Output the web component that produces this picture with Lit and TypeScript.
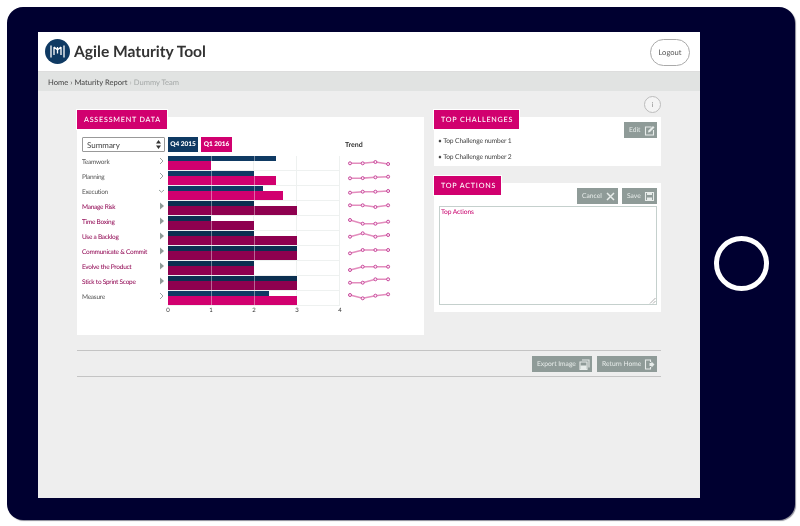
import { css, html, svg, LitElement } from 'lit';
import { customElement } from 'lit/decorators.js';

const UNIT = 43;
const NAVY = '#0f3a63';
const NAVY_DEEP = '#0b2f50';
const PINK = '#d1006f';
const DARK = '#8e004f';

interface Row {
  label: string;
  flagged?: boolean;
  open?: boolean;
  q4: number;
  q1: number;
  trend: number[];
}

const rows: Row[] = [
  { label: 'Teamwork', q4: 2.5, q1: 1, trend: [7.3, 7.3, 6, 8] },
  { label: 'Planning', q4: 2, q1: 2.5, trend: [7.3, 7.1, 6.3, 5.7] },
  { label: 'Execution', open: true, q4: 2.2, q1: 2.67, trend: [6.7, 5.7, 5.7, 5] },
  { label: 'Manage Risk', flagged: true, q4: 2, q1: 3, trend: [4.3, 4.3, 6, 4.3] },
  { label: 'Time Boxing', flagged: true, q4: 1, q1: 2, trend: [4, 7.7, 7.7, 5.7] },
  { label: 'Use a Backlog', flagged: true, q4: 2, q1: 3, trend: [5.7, 2.3, 5.7, 4] },
  { label: 'Communicate & Commit', flagged: true, q4: 3, q1: 3, trend: [7.3, 4, 4, 4] },
  { label: 'Evolve the Product', flagged: true, q4: 2, q1: 2, trend: [9, 5.7, 5.7, 5.7] },
  { label: 'Stick to Sprint Scope', flagged: true, q4: 3, q1: 3, trend: [6.7, 6.7, 3.3, 3.3] },
  { label: 'Measure', q4: 2.35, q1: 3, trend: [4, 7.3, 4.7, 3.3] },
];

const rowIcon = (r: Row) => {
  if (r.flagged) return svg`<path d="M1 1.5 L5 5 L1 8.5 Z" fill="#8f9c98"/>`;
  if (r.open) return svg`<path d="M0 4 L2.5 6.2 L5 4" fill="none" stroke="#9aa5a2"/>`;
  return svg`<path d="M1 2 L4 5 L1 8" fill="none" stroke="#9aa5a2"/>`;
};

const sparkline = (trend: number[]) => {
  const pts = trend.map((y, i) => [3 + i * 12.7, y]);
  return html`<svg class="spark" width="46" height="15" viewBox="0 0 46 15">
    <polyline points=${pts.map((p) => p.join(',')).join(' ')} fill="none" stroke="#e38dbd" stroke-width="1.6"/>
    ${pts.map((p) => svg`<circle cx=${p[0]} cy=${p[1]} r="1.5" fill="#fbeef5" stroke="#c8459b" stroke-width="1"/>`)}
  </svg>`;
};

const icons = {
  edit: svg`<path d="M7.5 2H1.5V10H9.5V5" fill="none" stroke="currentColor" stroke-width="1.1"/><path d="M4 7.5 L4.4 5.5 L9 1 L10.5 2.5 L6 7 Z" fill="currentColor"/>`,
  cancel: svg`<path d="M2 2 L9 9 M9 2 L2 9" stroke="currentColor" stroke-width="1.5"/>`,
  save: svg`<path d="M1.5 1.5H9.5V9.5H1.5Z" fill="none" stroke="currentColor" stroke-width="1.1"/><path d="M3 1.5H8V4H3Z M3 6.5H8V9.5H3Z" fill="currentColor"/>`,
  exportImage: svg`<path d="M3 1H10V8.5" fill="none" stroke="currentColor" stroke-width="1.1"/><path d="M1 3H8V10.5H1Z" fill="none" stroke="currentColor" stroke-width="1.1"/><path d="M1.5 6.5H7.5V10H1.5Z" fill="currentColor"/>`,
  home: svg`<path d="M6.5 3V1H1.5V10H6.5V8" fill="none" stroke="currentColor" stroke-width="1.1"/><path d="M5.5 4H7.5V2.5L10.5 5.5L7.5 8.5V7H5.5Z" fill="currentColor"/>`,
};

@customElement('app-root')
export class AppRoot extends LitElement {
  static styles = css`
    :host {
      display: block;
      width: 800px;
      height: 526px;
      background: #fff;
      font-family: Lato, sans-serif;
      font-size: 7px;
      color: #444;
      overflow: hidden;
      text-rendering: geometricPrecision;
    }

    * {
      box-sizing: border-box;
    }

    .tablet {
      margin: 7px 0 0 7px;
      width: 788px;
      height: 513px;
      padding: 25px 0 22px 31px;
      background: #000030;
      border-radius: 16px;
      box-shadow: 1px 1px 1px #8a8a96;
      display: flex;
      will-change: transform;
    }

    .screen {
      width: 662px;
      background: #eee;
      display: flex;
      flex-direction: column;
    }

    .home-key {
      width: 55px;
      height: 55px;
      margin: 204px 0 0 14px;
      border: 5px solid #fff;
      border-radius: 50%;
    }

    header {
      height: 40px;
      padding: 0 10px 0 7px;
      background: #fff;
      border-bottom: 1px solid #ddd;
      display: flex;
      align-items: center;
      gap: 4px;
    }

    .brand {
      flex: 1;
      font-size: 15.6px;
      font-weight: 700;
      color: #333;
    }

    .logout {
      width: 40px;
      height: 27px;
      border: 1px solid #aaa;
      border-radius: 14px;
      display: flex;
      align-items: center;
      justify-content: center;
      font-size: 7.6px;
      color: #555;
      margin-top: 1px;
    }

    .crumbs {
      height: 19px;
      padding-left: 10px;
      background: #e1e3e2;
      display: flex;
      align-items: center;
      gap: 2px;
      font-size: 7.6px;
      color: #444;
    }

    .crumbs .here {
      color: #a5a9a8;
    }

    main {
      position: relative;
      padding: 19px 39px 0;
    }

    .info {
      position: absolute;
      right: 39px;
      top: 5px;
      width: 17px;
      height: 17px;
      border: 1px solid #bbb;
      border-radius: 50%;
      background: #f4f4f4;
      display: flex;
      align-items: center;
      justify-content: center;
      font-size: 7px;
      color: #888;
    }

    .columns {
      display: flex;
      gap: 10px;
      height: 225px;
    }

    .panel {
      background: #fff;
      position: relative;
    }

    .tab {
      display: flex;
      align-items: center;
      height: 19px;
      margin-top: -7px;
      padding-left: 7px;
      background: #d1006f;
      color: #fff;
      font-size: 7.2px;
      font-weight: 500;
      letter-spacing: 0.78px;
      white-space: nowrap;
      box-shadow: 0 0 0 1px #fff;
    }

    .assessment {
      width: 347px;
      height: 218px;
      margin-top: 7px;
    }

    .assessment .tab {
      width: 90px;
    }

    .controls {
      display: flex;
      height: 15px;
      margin: 8px 0 4px 5px;
    }

    .select {
      width: 83px;
      height: 15px;
      margin-right: 3px;
      padding: 0 3px 0 4px;
      border: 1px solid #999;
      border-radius: 1px;
      display: flex;
      align-items: center;
      justify-content: space-between;
      font-size: 8px;
      color: #444;
    }

    .legend {
      height: 15px;
      display: flex;
      align-items: center;
      justify-content: center;
      color: #fff;
      font-size: 6.5px;
      font-weight: 900;
    }

    .legend.q4 {
      width: 30px;
      margin-right: 3px;
      background: #0f3a63;
    }

    .legend.q1 {
      width: 31px;
      margin-right: 2px;
      background: #d1006f;
    }

    .trend-title {
      margin-left: 111px;
      font-size: 7px;
      font-weight: 700;
      color: #333;
      align-self: flex-start;
      margin-top: 5px;
      line-height: 7px;
    }

    .row {
      display: flex;
      align-items: flex-start;
      height: 15px;
    }

    .label {
      width: 82px;
      padding-left: 5px;
      line-height: 13px;
      white-space: nowrap;
      font-size: 6.5px;
      letter-spacing: -0.25px;
      color: #555;
    }

    .row.flagged .label {
      color: #8e004f;
    }

    .chev {
      width: 7px;
      height: 10px;
      margin-right: 2px;
    }

    .track {
      position: relative;
      width: 172px;
      height: 15px;
      border-bottom: 1px solid #eef1f0;
      border-right: 1px solid #eef1f0;
      background-image: linear-gradient(90deg, transparent 42px, #eef1f0 42px, #eef1f0 43px, transparent 43px, transparent 85px, #eef1f0 85px, #eef1f0 86px, transparent 86px, transparent 128px, #eef1f0 128px, #eef1f0 129px, transparent 129px);
    }

    .bar {
      height: 5px;
    }

    .bar.second {
      height: 9px;
    }

    .grid-line {
      position: absolute;
      top: 0;
      bottom: 0;
      width: 1px;
      background: rgba(255, 255, 255, 0.4);
    }

    .spark {
      margin-left: 7px;
    }

    .axis {
      display: flex;
      justify-content: space-between;
      width: 172px;
      margin: 1px 0 0 91px;
      font-size: 6px;
      color: #333;
    }

    .axis span {
      width: 0;
      display: flex;
      justify-content: center;
    }

    .side {
      width: 227px;
      display: flex;
      flex-direction: column;
      gap: 17px;
      padding-top: 7px;
    }

    .challenges {
      height: 49px;
    }

    .challenges .tab {
      width: 85px;
    }

    .list {
      padding: 4px 0 0 4px;
    }

    .list p {
      margin: 0;
      line-height: 16px;
      font-size: 6.7px;
      letter-spacing: -0.12px;
      color: #444;
    }

    .actions {
      height: 129px;
    }

    .actions .tab {
      width: 67px;
    }

    .tools {
      position: absolute;
      top: 5px;
      right: 4px;
      display: flex;
      gap: 4px;
    }

    .btn {
      height: 16px;
      padding: 0 2px 0 5px;
      background: #8f9b98;
      color: #e7ecea;
      font-size: 6.7px;
      display: flex;
      align-items: center;
      justify-content: space-between;
      white-space: nowrap;
    }

    .btn svg {
      width: 11px;
      height: 11px;
      flex: none;
    }

    .textarea {
      position: relative;
      margin: 11px 4px 0 5px;
      height: 99px;
      padding: 1px;
      border: 1px solid #c5d0cd;
      font-size: 6.7px;
      letter-spacing: -0.12px;
      color: #c8006c;
    }

    .grip {
      position: absolute;
      right: 0;
      bottom: 0;
    }

    .footer {
      margin-top: 15px;
      height: 27px;
      border-top: 1px solid #c4c4c4;
      border-bottom: 1px solid #c4c4c4;
      padding: 5px 4px 0 0;
      display: flex;
      justify-content: flex-end;
      gap: 5px;
    }
  `;

  private _button(label: string, icon: unknown, width: number) {
    return html`<div class="btn" style="width:${width}px">
      ${label}
      <svg viewBox="0 0 11 11">${icon}</svg>
    </div>`;
  }

  private _row(r: Row) {
    const tone = r.flagged ? DARK : PINK;
    const navy = r.flagged ? NAVY_DEEP : NAVY;
    return html`<div class="row ${r.flagged ? 'flagged' : ''}">
      <div class="label">${r.label}</div>
      <svg class="chev" viewBox="0 0 7 10">${rowIcon(r)}</svg>
      <div class="track">
        <div class="bar" style="width:${r.q4 * UNIT}px;background:${navy}"></div>
        <div class="bar second" style="width:${r.q1 * UNIT}px;background:${tone}"></div>
        <div class="grid-line" style="left:${UNIT}px"></div>
        <div class="grid-line" style="left:${UNIT * 2}px"></div>
      </div>
      ${sparkline(r.trend)}
    </div>`;
  }

  protected render() {
    return html`
      <div class="tablet">
        <div class="screen">
          <header>
            <svg width="25" height="25" viewBox="0 0 25 25">
              <circle cx="12.5" cy="12.5" r="12.5" fill=${NAVY}/>
              <path d="M6 6.5V18.5M9 8V16M12.5 8V14.5M16 8V16M19 6.5V18.5M9 8 12.5 11 16 8" stroke="#fff" stroke-width="1.3" fill="none"/>
            </svg>
            <div class="brand">Agile Maturity Tool</div>
            <div class="logout">Logout</div>
          </header>
          <div class="crumbs">
            <span>Home</span><span>›</span><span>Maturity Report</span><span class="here">›</span>
            <span class="here">Dummy Team</span>
          </div>
          <main>
            <div class="info">i</div>
            <div class="columns">
              <section class="panel assessment">
                <div class="tab">ASSESSMENT DATA</div>
                <div class="controls">
                  <div class="select">
                    <span>Summary</span>
                    <svg width="5" height="9" viewBox="0 0 5 9"><path d="M2.5 0 L5 3.5 H0Z M2.5 9 L5 5.5 H0Z" fill="#333"/></svg>
                  </div>
                  <div class="legend q4">Q4 2015</div>
                  <div class="legend q1">Q1 2016</div>
                  <div class="trend-title">Trend</div>
                </div>
                ${rows.map((r) => this._row(r))}
                <div class="axis">
                  ${[0, 1, 2, 3, 4].map((n) => html`<span>${n}</span>`)}
                </div>
              </section>
              <div class="side">
                <section class="panel challenges">
                  <div class="tab">TOP CHALLENGES</div>
                  <div class="tools">${this._button('Edit', icons.edit, 33)}</div>
                  <div class="list">
                    <p>• Top Challenge number 1</p>
                    <p>• Top Challenge number 2</p>
                  </div>
                </section>
                <section class="panel actions">
                  <div class="tab">TOP ACTIONS</div>
                  <div class="tools">
                    ${this._button('Cancel', icons.cancel, 41)}
                    ${this._button('Save', icons.save, 35)}
                  </div>
                  <div class="textarea">
                    Top Actions
                    <svg class="grip" width="7" height="7" viewBox="0 0 7 7">
                      <path d="M1 6.5 6.5 1M4 6.5 6.5 4" stroke="#999" stroke-width="0.8"/>
                    </svg>
                  </div>
                </section>
              </div>
            </div>
            <div class="footer">
              ${this._button('Export Image', icons.exportImage, 60)}
              ${this._button('Return Home', icons.home, 60)}
            </div>
          </main>
        </div>
        <div class="home-key"></div>
      </div>
    `;
  }
}
